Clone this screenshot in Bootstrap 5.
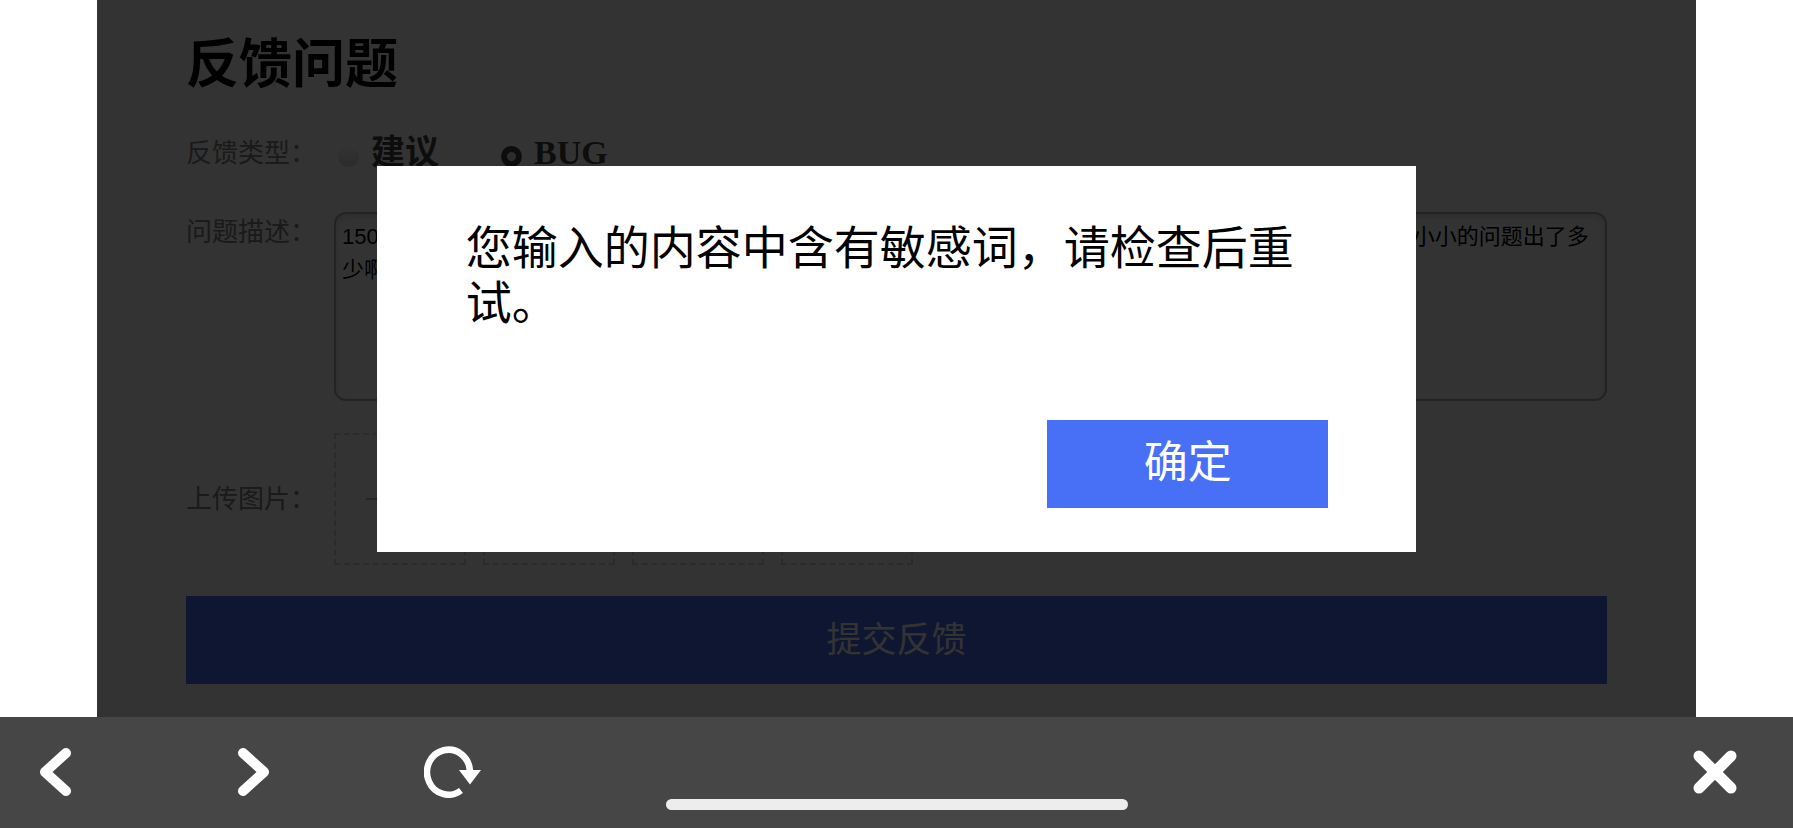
<!DOCTYPE html>
<html lang="zh-CN">
<head>
<meta charset="utf-8">
<meta name="viewport" content="width=device-width, initial-scale=1">
<title>反馈问题</title>
<link href="https://cdn.jsdelivr.net/npm/bootstrap@5.3.0/dist/css/bootstrap.min.css" rel="stylesheet">
<style>
  body { font-family: "Liberation Sans", "Noto Sans CJK SC", sans-serif; background: #fff; color: #000; }
  .stage { margin: 0 97px; }
  .feedback { padding: 33px 89px 33px; }
  .feedback h1 { font-size: 53px; line-height: 64px; font-weight: 700; margin-bottom: 36px; }
  .field-label { flex: 0 0 148px; font-size: 26px; line-height: 40px; font-weight: 400; color: #808080; }
  .type-row { margin-bottom: 39px; }
  .type-options { gap: 62px; padding-left: 4px; }
  .type-option { gap: 12px; }
  .type-option label { font-family: "Liberation Serif", "Noto Sans CJK SC", serif; font-size: 34px; line-height: 40px; font-weight: 700; color: #444; }
  .type-option input { appearance: none; width: 21px; height: 21px; margin: 13px 0 0; border-radius: 50%; background: linear-gradient(#fff, #d4d4d4); }
  .type-option input:checked { background: radial-gradient(circle, #ddd 0 4px, #444 5px); }
  .describe-row { margin-bottom: 32px; }
  .describe { height: 189px; padding: 6px; border: 2px solid #b0b0b0; border-radius: 12px; resize: none; overflow: hidden; font-size: 22px; line-height: 33px; color: #000; background: #fff; box-shadow: inset 0 3px 6px #ddd; }
  .upload-row { margin-bottom: 31px; }
  .upload-list { gap: 17px; }
  .upload-slot { width: 132px; height: 132px; border: 2px dashed #d4d4d4; background: transparent; padding: 0; }
  .submit { height: 88px; padding: 0; font-size: 35px; line-height: 48px; font-weight: 400; color: #fff; background: #4870f7; border-radius: 0; }
  .shade { position: absolute; inset: 0; background: rgba(0, 0, 0, .8); }
  .dialog-box { width: 65%; padding: 55px 88px 44px 89px; background: #fff; }
  .dialog-box p { font-size: 46px; line-height: 55px; margin-bottom: 89px; }
  .confirm { width: 281px; height: 88px; padding: 0 0 2px; font-size: 44px; line-height: 60px; color: #fff; background: #4870f7; border-radius: 0; }
  .browser-bar { position: relative; height: 111px; padding: 28px 56px 0 40px; background: #464646; }
  .browser-bar button { border: 0; padding: 0; background: transparent; line-height: 0; }
  .nav-tools { gap: 155px; }
  .nav-tools .forward { margin: 0 0 0 12px; }
  .home-line { position: absolute; left: 50%; bottom: 18px; width: 462px; height: 11px; margin-left: -231px; border-radius: 6px; background: #ededed; }
</style>
</head>
<body class="d-flex flex-column min-vh-100">
  <main class="stage position-relative flex-grow-1">
    <form class="feedback">
      <h1>反馈问题</h1>
      <div class="type-row d-flex" role="radiogroup" aria-labelledby="type-label">
        <span class="field-label" id="type-label">反馈类型：</span>
        <div class="type-options d-flex">
          <div class="type-option d-flex align-items-start">
            <input type="radio" name="type" id="type-idea">
            <label for="type-idea">建议</label>
          </div>
          <div class="type-option d-flex align-items-start">
            <input type="radio" name="type" id="type-bug" checked>
            <label for="type-bug">BUG</label>
          </div>
        </div>
      </div>
      <div class="describe-row d-flex align-items-start">
        <label class="field-label" for="describe">问题描述：</label>
        <textarea class="describe flex-grow-1" id="describe">150　　　　　　　　　　　　　　　　　　　　　　　　　　　　　　　　　　　　　　　　　　　　　　　小小的问题出了多
少啊</textarea>
      </div>
      <div class="upload-row d-flex align-items-center">
        <span class="field-label">上传图片：</span>
        <div class="upload-list d-flex">
          <button type="button" class="upload-slot" aria-label="添加图片">
            <svg width="68" height="68" viewBox="0 0 68 68" stroke="#bbb" stroke-width="2"><path d="M0 34H68M34 0V68"/></svg>
          </button>
          <button type="button" class="upload-slot" aria-label="添加图片"></button>
          <button type="button" class="upload-slot" aria-label="添加图片"></button>
          <button type="button" class="upload-slot" aria-label="添加图片"></button>
        </div>
      </div>
      <button type="button" class="submit btn border-0 w-100 d-block">提交反馈</button>
    </form>

    <div class="shade d-flex align-items-center justify-content-center">
      <div class="dialog-box" role="alertdialog" aria-modal="true" aria-describedby="dialog-text">
        <p id="dialog-text">您输入的内容中含有敏感词，请检查后重试。</p>
        <button type="button" class="confirm btn border-0 d-block ms-auto">确定</button>
      </div>
    </div>
  </main>

  <nav class="browser-bar d-flex justify-content-between align-items-start">
    <div class="nav-tools d-flex">
      <button type="button" aria-label="后退">
        <svg width="31" height="53" viewBox="0 0 31 53" fill="none" stroke="#fff" stroke-width="10" stroke-linecap="round" stroke-linejoin="round"><path d="M26 8L5 27L26 46"/></svg>
      </button>
      <button type="button" class="forward" aria-label="前进">
        <svg width="31" height="53" viewBox="0 0 31 53" fill="none" stroke="#fff" stroke-width="10" stroke-linecap="round" stroke-linejoin="round"><path d="M5 8L26 27L5 46"/></svg>
      </button>
      <button type="button" aria-label="刷新">
        <svg width="57" height="53" viewBox="0 0 57 53"><path d="M37 45.500A21.500 22.500 0 1 1 46 26.500" fill="none" stroke="#fff" stroke-width="6.500"/><path d="M35 25H57L46 39.500Z" fill="#fff"/></svg>
      </button>
    </div>
    <button type="button" aria-label="关闭">
      <svg width="44" height="53" viewBox="0 0 44 53" stroke="#fff" stroke-width="11" stroke-linecap="round"><path d="M6 11L38 43M38 11L6 43"/></svg>
    </button>
    <div class="home-line"></div>
  </nav>
<script src="https://cdn.jsdelivr.net/npm/bootstrap@5.3.0/dist/js/bootstrap.bundle.min.js"></script>
</body>
</html>
